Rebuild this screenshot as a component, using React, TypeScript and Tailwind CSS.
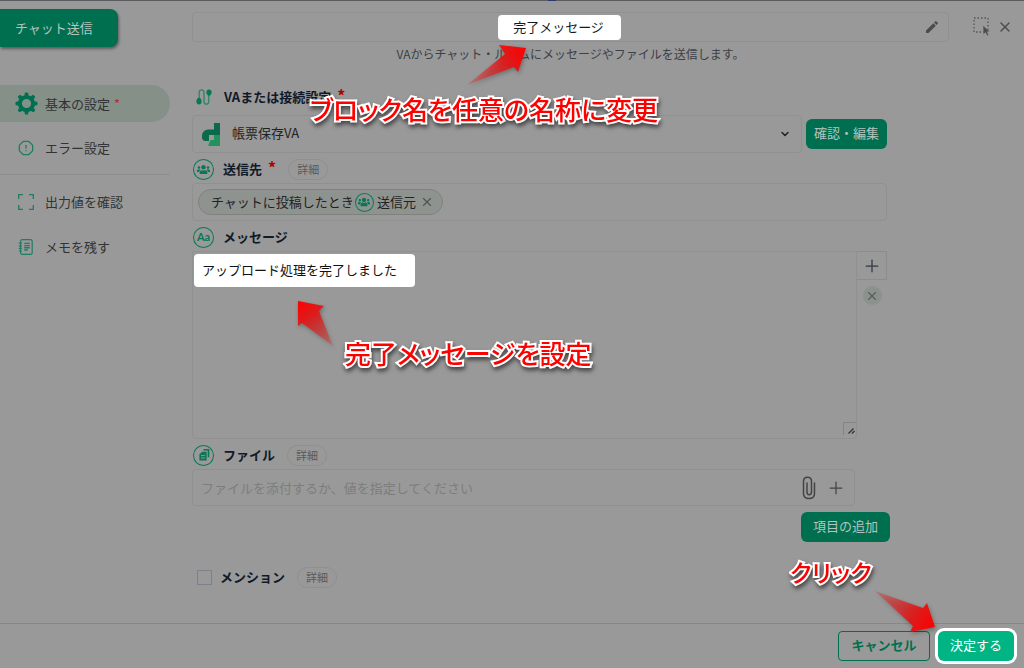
import type { ReactNode } from 'react';
import { ChevronDown, OctagonAlert, Plus, X } from 'lucide-react';
import { FaUsers } from 'react-icons/fa';
import { MdEdit } from 'react-icons/md';

function GearIcon() {
    return (
        <svg viewBox="0 0 24 24" className="size-[23px] text-[#006f50]" fill="currentColor" aria-hidden="true">
            {[0, 45, 90, 135, 180, 225, 270, 315].map((deg) => (
                <path key={deg} d="M9.6 6 L10.3 .8 Q12 0 13.7 .8 L14.4 6 Z" transform={`rotate(${deg} 12 12)`} />
            ))}
            <circle cx="12" cy="12" r="6.9" fill="none" stroke="currentColor" strokeWidth="4.2" />
        </svg>
    );
}

function CornersIcon() {
    return (
        <svg viewBox="0 0 16 16" className="size-4 text-[#1f7d60]" fill="none" stroke="currentColor" strokeWidth="1.3" aria-hidden="true">
            <path d="M.7 5V.7H5M11 .7h4.3V5M15.3 11v4.3H11M5 15.3H.7V11" />
        </svg>
    );
}

function MemoIcon() {
    return (
        <svg viewBox="0 0 16 16" className="size-4 text-[#1f7d60]" fill="none" stroke="currentColor" strokeWidth="1.2" aria-hidden="true">
            <rect x="2.6" y=".7" width="11.6" height="14.6" rx="1.6" />
            <path d="M.8 4.2h3M.8 6.8h3M.8 9.4h3M.8 12h3" />
            <path d="M6.2 4.4h5.6M6.2 6.6h5.6M6.2 8.8h5.6M6.2 11h3.6" strokeWidth="1.4" />
        </svg>
    );
}

function RouteIcon() {
    return (
        <svg viewBox="0 0 16 16" className="size-4 text-[#0b7656]" fill="none" aria-hidden="true">
            <path d="M3.2 10V3.6C3.2 1.8 4.1.8 5.6.8S8 1.8 8 3.6v8.8c0 1.8.9 2.8 2.4 2.8s2.4-1 2.4-2.8V6" stroke="#2f8468" strokeWidth="1.3" />
            <path d="M3 8.8C4.4 8.8 5.6 10.5 5.6 12.4S4.5 15.4 3 15.4.4 14.3.4 12.4 1.6 8.8 3 8.8Z" fill="currentColor" />
            <path d="M13 .6c1.500 0 2.600 1.100 2.600 2.700S14.500 6.800 13 6.800s-2.600-1.900-2.600-3.500S11.500.6 13 .6Z" fill="currentColor" />
        </svg>
    );
}

function VaLogo() {
    return (
        <svg viewBox="0 0 18 23" className="h-[23px] w-[18px]" aria-hidden="true">
            <path d="M12 0h6v12H7v6H3.5C1.5 18 0 16.500 0 14.500V13C0 9.500 2.500 6.500 6 6.500h6Z" fill="#0c6a4c" />
            <path d="M12 12h6v11H6.500v-1.500L8.500 17H12Z" fill="#23925d" />
            <path d="M8 12h4v5H8Z" fill="#999999" />
        </svg>
    );
}

function MarqueeIcon() {
    return (
        <svg viewBox="0 0 18 19" className="h-[19px] w-[18px]" fill="none" aria-hidden="true">
            <rect x="1" y="1" width="14" height="14" stroke="#545454" strokeWidth="1.3" strokeDasharray="1.5 2" />
            <path d="M10 8.5 17 14.5l-3 .3 1.7 3.2-1.6.8-1.6-3.2-2.2 1.9Z" fill="#4c4c4c" stroke="#999999" strokeWidth=".5" />
        </svg>
    );
}

function ClipIcon() {
    return (
        <svg viewBox="0 0 14 24" className="h-6 w-3.5 text-[#444444]" fill="none" stroke="currentColor" strokeWidth="1.5" strokeLinecap="round" aria-hidden="true">
            <path d="M12.5 7v10.5c0 3-2 5-5.500 5s-5.500-2-5.500-5V5.500c0-2.500 1.500-4.200 4-4.200s4 1.700 4 4.200V16c0 1.700-.8 2.700-2.300 2.700S5 17.700 5 16V7" />
        </svg>
    );
}

function RoundIcon({ children, small }: { children: ReactNode; small?: boolean }) {
    const size = small ? 'size-[17px] text-[12px]' : 'size-[19px] text-[13px]';
    return (
        <span className={`flex shrink-0 items-center justify-center rounded-full border-[#0b7656] text-[#0b7656] ring-1 ring-[#0b7656] ${size}`}>
            {children}
        </span>
    );
}

function DocsIcon() {
    return (
        <svg viewBox="0 0 12 12" className="size-3" aria-hidden="true">
            <path d="M5.500 .8h5v7.500" fill="none" stroke="currentColor" strokeWidth="1.6" />
            <path d="M4 2.800H8.600v8.800H1.400V5.400Z" fill="currentColor" />
            <path d="M3 6.600h4M3 9h4" stroke="#999999" strokeWidth=".9" />
        </svg>
    );
}

function DetailButton() {
    return (
        <button type="button" className="h-[21px] rounded-full border border-[#8f8f8f] px-2 text-[11px] leading-none text-[#5a5a5a]">
            詳細
        </button>
    );
}

function FieldLabel({ icon, label, htmlFor, required, detail }: { icon: ReactNode; label: string; htmlFor: string; required?: boolean; detail?: boolean }) {
    return (
        <div className="flex h-[30px] items-center pt-0.5 pl-0.5">
            {icon}
            <label htmlFor={htmlFor} className="ml-2.5 font-bold text-[#111a29]">{label}</label>
            {required && <span className="ml-1.5 -mt-1 text-base font-bold text-[#b00000]">*</span>}
            {detail && <span className="ml-3 flex"><DetailButton /></span>}
        </div>
    );
}

function Caption({ className, children }: { className: string; children: ReactNode }) {
    return (
        <p className={`pointer-events-none absolute whitespace-nowrap leading-9 font-medium text-[#ff0000] [font-feature-settings:'palt'] [-webkit-text-stroke:4px_#fff] [paint-order:stroke_fill] drop-shadow-[1px_3px_2px_rgba(0,0,0,0.55)] ${className}`}>
            {children}
        </p>
    );
}

function Arrow({ className, id, box, points, from, to }: { className: string; id: string; box: string; points: string; from: [number, number]; to: [number, number] }) {
    return (
        <svg viewBox={box} className={`pointer-events-none absolute overflow-visible drop-shadow-[1px_2px_2px_rgba(0,0,0,0.3)] ${className}`} aria-hidden="true">
            <defs>
                <linearGradient id={id} gradientUnits="userSpaceOnUse" x1={from[0]} y1={from[1]} x2={to[0]} y2={to[1]}>
                    <stop offset="0" stopColor="#e03030" stopOpacity="0.3" />
                    <stop offset="0.65" stopColor="#e01818" stopOpacity="0.95" />
                    <stop offset="1" stopColor="#ff0000" />
                </linearGradient>
            </defs>
            <polygon points={points} fill={`url(#${id})`} />
        </svg>
    );
}

const menu = [
    { label: '出力値を確認', href: '#output', icon: <CornersIcon /> },
    { label: 'メモを残す', href: '#memo', icon: <MemoIcon /> },
];

export default function App() {
    return (
        <div className="relative flex min-h-screen flex-col bg-[#999999] font-['Noto_Sans_CJK_JP',sans-serif] text-[13px] leading-5 text-[#222222]">
            <div className="flex h-px justify-center bg-[#5c5c60]">
                <span className="ml-20 w-2 bg-[#263c70]" />
            </div>

            <header className="flex h-[63px] items-start">
                <div className="w-[192px] shrink-0 pt-2">
                    <h1 className="flex h-[38px] w-[118px] items-center rounded-r-lg bg-[#006f50] pl-[15px] text-[#b4c4be] shadow-[1px_2px_3px_rgba(0,0,0,0.4)]">
                        チャット送信
                    </h1>
                </div>
                <div className="min-w-0 flex-1 pt-[11px]">
                    <div className="relative flex h-[30px] items-center rounded border border-[#909090] px-2">
                        <span className="absolute top-0.5 left-[305px] h-[25px] w-[123px] rounded bg-white" />
                        <input
                            aria-label="ブロック名"
                            defaultValue="完了メッセージ"
                            className="relative min-w-0 flex-1 bg-transparent pr-2 text-center text-[#111a29] outline-none"
                        />
                        <button type="button" aria-label="編集"><MdEdit className="size-4 text-[#4c4c4c]" /></button>
                    </div>
                    <p className="text-center text-xs leading-6 text-[#3c4046]">
                        VAからチャット・ルームにメッセージやファイルを送信します。
                    </p>
                </div>
                <div className="flex w-[75px] shrink-0 items-center gap-1.5 pt-4 pl-6">
                    <button type="button" aria-label="範囲選択"><MarqueeIcon /></button>
                    <button type="button" aria-label="閉じる"><X className="size-4 text-[#4c4c4c]" strokeWidth={2} /></button>
                </div>
            </header>

            <div className="flex flex-1 items-start pt-[21px]">
                <nav className="w-[170px] shrink-0">
                    <a href="#basic" className="flex h-[37px] items-center gap-[7px] rounded-r-full bg-[#859089] pl-[15px] text-[#333333]">
                        <GearIcon />
                        <span>基本の設定<span className="ml-1 text-[#b03030]">*</span></span>
                    </a>
                    <a href="#error" className="mt-2 flex h-9 items-center gap-[11px] pl-[18px] text-[#333333]">
                        <OctagonAlert className="size-4 text-[#1f7d60]" strokeWidth={2} />エラー設定
                    </a>
                    <hr className="mt-2 border-[#8e8e8e]" />
                    {menu.map((item) => (
                        <a key={item.label} href={item.href} className="mt-[9px] flex h-9 items-center gap-[11px] pl-[18px] text-[#333333]">
                            {item.icon}{item.label}
                        </a>
                    ))}
                </nav>

                <main className="ml-[22px] min-w-0 flex-1 pr-[134px]">
                    <div className="pr-[3px]">
                        <div className="-mt-1">
                            <FieldLabel htmlFor="va" icon={<span className="px-0.5"><RouteIcon /></span>} label="VAまたは接続設定" required />
                        </div>
                        <div className="mt-1 flex items-center gap-1">
                            <div className="relative flex h-[38px] flex-1 items-center gap-3 rounded border border-[#909090] pr-2 pl-[9px]">
                                <VaLogo />
                                <select id="va" className="h-full min-w-0 flex-1 appearance-none bg-transparent pb-0.5 text-[#222222] outline-none">
                                    <option>帳票保存VA</option>
                                </select>
                                <ChevronDown className="pointer-events-none absolute right-2.5 size-3 text-[#222222]" strokeWidth={3} />
                            </div>
                            <button type="button" className="h-[30px] w-[81px] rounded-md bg-[#006f50] pb-0.5 text-[#b4c4be]">確認・編集</button>
                        </div>

                        <FieldLabel htmlFor="dest" icon={<RoundIcon><FaUsers /></RoundIcon>} label="送信先" required detail />
                        <div className="flex h-[38px] items-center rounded border border-[#909090] px-[5px]">
                            <span className="flex h-[26px] shrink-0 items-center rounded-full border border-[#7e827f] bg-[#8f938f] pr-2 pl-3">
                                チャットに投稿したとき
                                <span className="mr-1 ml-0.5 flex"><RoundIcon small><FaUsers /></RoundIcon></span>
                                送信元
                                <button type="button" aria-label="削除" className="ml-1"><X className="size-3.5 text-[#505450]" strokeWidth={2} /></button>
                            </span>
                            <input id="dest" className="min-w-0 flex-1 bg-transparent outline-none" />
                        </div>

                        <FieldLabel htmlFor="message" icon={<RoundIcon><span className="font-['Lato',sans-serif] text-[11px] font-bold">Aa</span></RoundIcon>} label="メッセージ" />
                        <div className="flex items-start">
                            <div className="relative h-[188px] flex-1 rounded-b border border-[#909090]">
                                <span className="absolute top-0.5 left-px h-[33px] w-[221px] rounded bg-white" />
                                <textarea
                                    id="message"
                                    defaultValue="アップロード処理を完了しました"
                                    className="relative block h-full w-full resize-none bg-transparent px-[9px] py-2 leading-5 text-[#111111] outline-none"
                                />
                                <svg viewBox="0 0 13 13" className="absolute right-0 bottom-[3px] size-[13px]" fill="none" aria-hidden="true">
                                    <path d="M.5 13V.5H13" stroke="#848484" />
                                    <path d="m5.5 11.5 5-5M9 11.5l2.5-2.5" stroke="#333333" strokeWidth="1.3" />
                                </svg>
                            </div>
                            <div className="flex w-[30px] flex-col items-center gap-1.5">
                                <button type="button" aria-label="値を追加" className="flex h-[29px] w-full items-center justify-center border border-l-0 border-[#8c8c8c]">
                                    <Plus className="size-5 text-[#333740]" strokeWidth={1.5} />
                                </button>
                                <button type="button" aria-label="クリア" className="flex size-[19px] items-center justify-center rounded-full bg-[#8b918b]">
                                    <X className="size-3.5 text-[#5a5e5a]" strokeWidth={2} />
                                </button>
                            </div>
                        </div>

                        <FieldLabel htmlFor="file" icon={<RoundIcon><DocsIcon /></RoundIcon>} label="ファイル" detail />
                        <div className="mr-8 flex h-[37px] items-center rounded border border-[#909090] pr-2 pl-2">
                            <input
                                id="file"
                                placeholder="ファイルを添付するか、値を指定してください"
                                className="min-w-0 flex-1 bg-transparent outline-none placeholder:text-[#7d7d7d]"
                            />
                            <button type="button" aria-label="添付"><ClipIcon /></button>
                            <button type="button" aria-label="値を追加" className="ml-2.5"><Plus className="size-5 text-[#444444]" strokeWidth={1.5} /></button>
                        </div>
                    </div>
                    <div className="mt-1.5 flex justify-end">
                        <button type="button" className="h-[30px] w-[89px] rounded-md bg-[#006f50] pb-0.5 text-[#b4c4be]">項目の追加</button>
                    </div>

                    <div className="mt-5 flex h-[30px] items-center pl-[5px]">
                        <input id="mention" type="checkbox" className="size-[15px] appearance-none border border-[#7c828b]" />
                        <label htmlFor="mention" className="mr-3 ml-2 font-bold text-[#111a29]">メンション</label>
                        <DetailButton />
                    </div>
                </main>
            </div>

            <footer className="flex h-[45px] items-center justify-end gap-2 border-t border-[#878787] pr-2.5">
                <button type="button" className="h-[30px] w-[92px] rounded border border-[#006f50] pb-0.5 font-bold text-[#006f50]">キャンセル</button>
                <button type="button" className="h-[30px] w-[76px] rounded-md bg-[#00b483] pb-0.5 text-white ring-3 ring-white">決定する</button>
            </footer>

            <Arrow
                id="arrow-title" className="top-[44px] left-[466px] h-[43px] w-[61px]" box="466 44 61 43"
                points="526,48 499,45 505,54 467,85 514,67 518,72" from={[467, 85]} to={[526, 48]}
            />
            <Arrow
                id="arrow-message" className="top-[300px] left-[297px] h-[47px] w-[37px]" box="297 300 37 47"
                points="298,301 324,306 319,311 333,346 302,323 298,326" from={[333, 346]} to={[298, 301]}
            />
            <Arrow
                id="arrow-submit" className="top-[590px] left-[874px] h-[42px] w-[62px]" box="874 590 62 42"
                points="935,627 927,603 923,608 875,591 913,626 910,632" from={[875, 591]} to={[935, 627]}
            />
            <Caption className="top-[91px] left-[310px] text-[26px]">ブロック名を任意の名称に変更</Caption>
            <Caption className="top-[335px] left-[345px] text-[26px]">完了メッセージを設定</Caption>
            <Caption className="top-[554px] left-[790px] text-[24px]">クリック</Caption>
        </div>
    );
}
